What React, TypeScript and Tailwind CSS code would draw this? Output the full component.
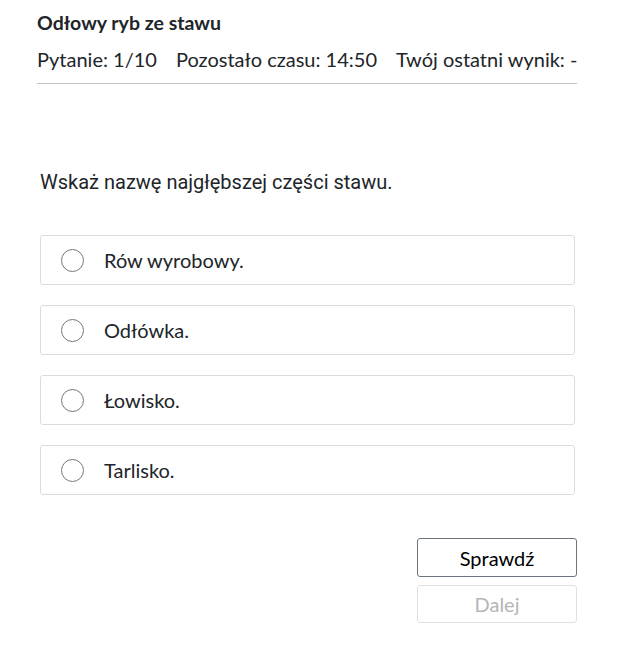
import React from "react";

const options = ["Rów wyrobowy.", "Odłówka.", "Łowisko.", "Tarlisko."];

export default function App() {
  return (
    <div className="bg-white w-[623px] h-[654px] text-[#212529]" style={{ fontFamily: "Lato, sans-serif" }}>
      <div className="w-[540px] ml-[37px] pt-[10px]">
        <div className="text-[19.5px] font-bold leading-[25px]">Odłowy ryb ze stawu</div>
        <div className="mt-[11px] text-[20px] leading-[26px] flex gap-[19px] whitespace-nowrap pb-[11px] border-b border-[#c4c4c4]">
          <span>Pytanie: 1/10</span>
          <span>Pozostało czasu: 14:50</span>
          <span>Twój ostatni wynik: -</span>
        </div>
        <div
          className="mt-[85px] ml-[3px] text-[20px] leading-[26px]"
          style={{ fontFamily: "Roboto, sans-serif" }}
        >
          Wskaż nazwę najgłębszej części stawu.
        </div>
        <div className="mt-[40px] ml-[3px] w-[535px] flex flex-col gap-[20px]">
          {options.map((o) => (
            <div
              key={o}
              className="h-[50px] border border-[#dcdcdc] rounded-[3px] flex items-center pl-[20px]"
            >
              <span className="w-[23px] h-[23px] rounded-full border border-[#777] block" />
              <span className="ml-[20px] text-[20px]">{o}</span>
            </div>
          ))}
        </div>
        <div className="mt-[43px] flex flex-col items-end gap-[8px]">
          <button className="w-[160px] h-[39px] border border-[#6c757d] rounded-[3px] text-[20px] text-black bg-white">
            Sprawdź
          </button>
          <button className="w-[160px] h-[38px] border border-[#e0e0e0] rounded-[3px] text-[20px] text-[#b5b5b5] bg-white">
            Dalej
          </button>
        </div>
      </div>
    </div>
  );
}
